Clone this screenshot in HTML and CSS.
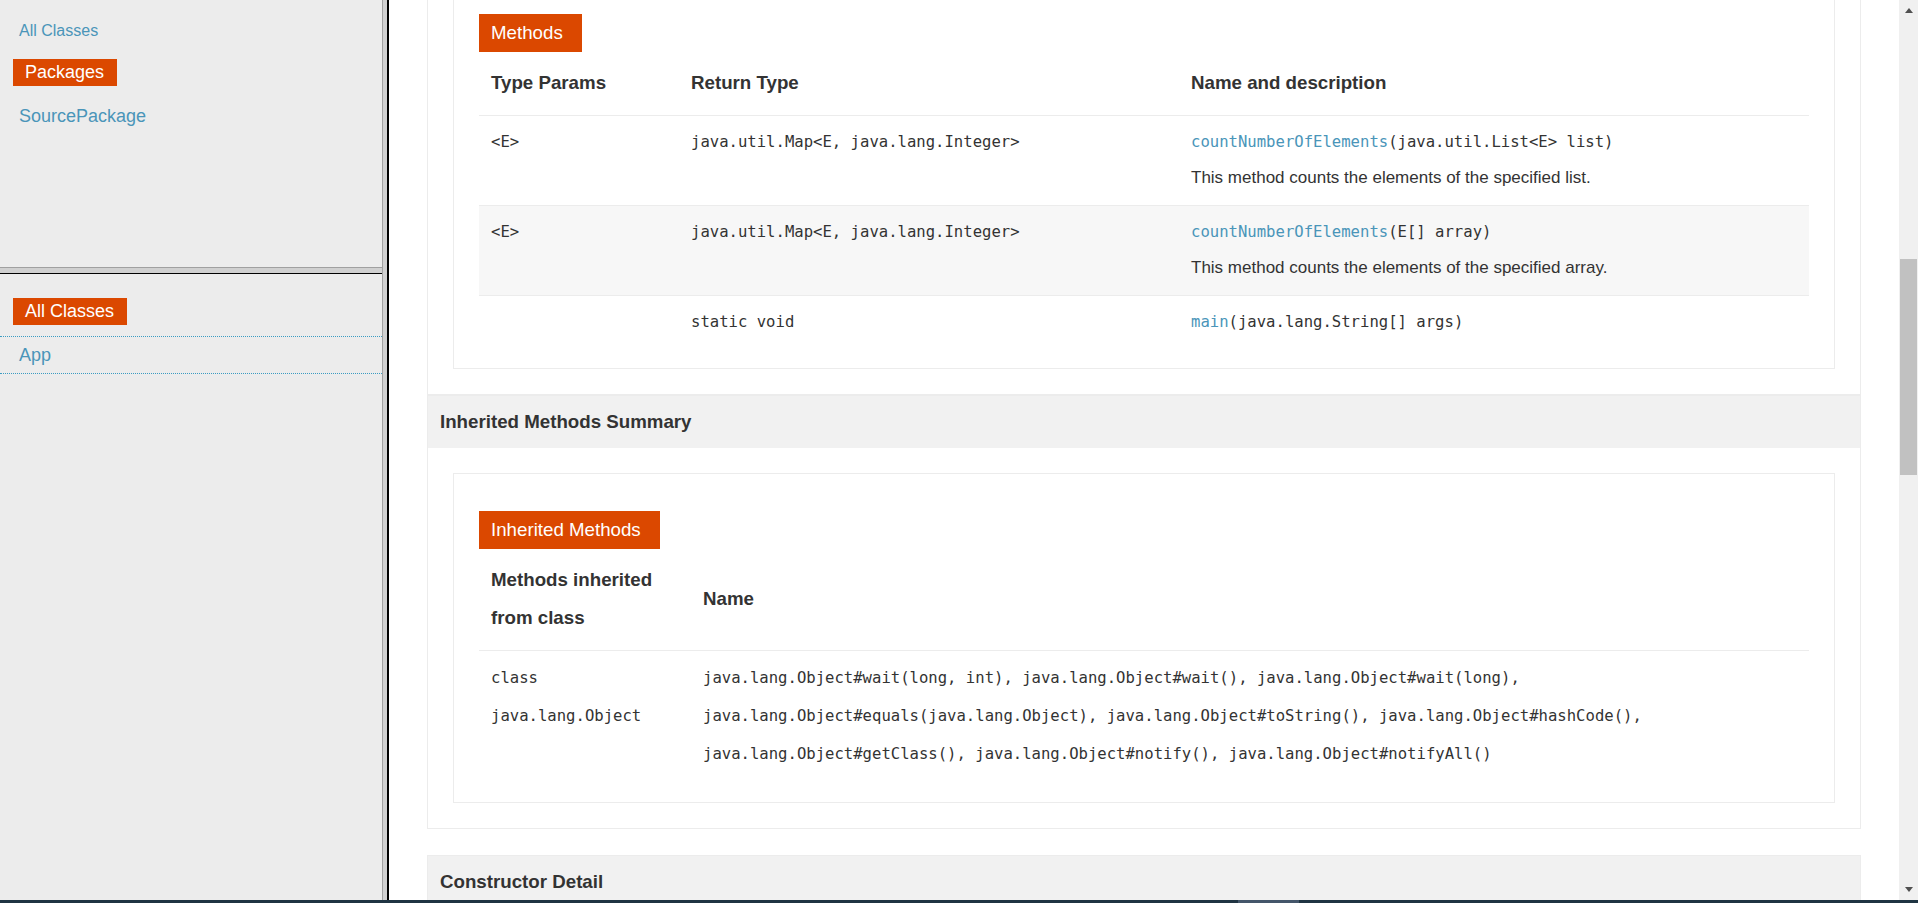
FILE: index.html
```html
<!DOCTYPE html>
<html lang="en">
<head>
<meta charset="utf-8">
<title>App</title>
<link rel="stylesheet" href="styles.css">
</head>
<body>
<div class="frames">
  <div class="left">
    <div class="left-top">
      <a class="nav-link" href="#">All Classes</a>
      <h2 class="tag tag-packages">Packages</h2>
      <a class="pkg-link" href="#">SourcePackage</a>
    </div>
    <div class="hsplit"></div>
    <div class="left-bottom">
      <h2 class="tag tag-classes">All Classes</h2>
      <ul class="class-list">
        <li><a href="#">App</a></li>
      </ul>
    </div>
  </div>
  <div class="vsplit"></div>
  <div class="right">
    <div class="doc">
      <section class="block block-methods">
        <div class="block-body">
          <div class="summary">
            <table class="tbl tbl-methods">
              <caption><span class="caption-tag">Methods</span></caption>
              <colgroup><col class="c-type"><col class="c-ret"><col></colgroup>
              <thead>
                <tr><th>Type Params</th><th>Return Type</th><th>Name and description</th></tr>
              </thead>
              <tbody>
                <tr>
                  <td><code>&lt;E&gt;</code></td>
                  <td><code>java.util.Map&lt;E, java.lang.Integer&gt;</code></td>
                  <td><code><a href="#">countNumberOfElements</a>(java.util.List&lt;E&gt; list)</code>
                    <div class="desc">This method counts the elements of the specified list.</div></td>
                </tr>
                <tr class="alt">
                  <td><code>&lt;E&gt;</code></td>
                  <td><code>java.util.Map&lt;E, java.lang.Integer&gt;</code></td>
                  <td><code><a href="#">countNumberOfElements</a>(E[] array)</code>
                    <div class="desc">This method counts the elements of the specified array.</div></td>
                </tr>
                <tr class="last">
                  <td></td>
                  <td><code>static void</code></td>
                  <td><code><a href="#">main</a>(java.lang.String[] args)</code></td>
                </tr>
              </tbody>
            </table>
          </div>
        </div>
      </section>

      <section class="block block-inherited">
        <h3 class="block-title">Inherited Methods Summary</h3>
        <div class="block-body">
          <div class="summary">
            <table class="tbl tbl-inherited">
              <caption><span class="caption-tag">Inherited Methods</span></caption>
              <colgroup><col class="c-from"><col></colgroup>
              <thead>
                <tr><th>Methods inherited from class</th><th>Name</th></tr>
              </thead>
              <tbody>
                <tr class="last">
                  <td><code>class java.lang.Object</code></td>
                  <td><code>java.lang.Object#wait(long, int), java.lang.Object#wait(), java.lang.Object#wait(long), java.lang.Object#equals(java.lang.Object), java.lang.Object#toString(), java.lang.Object#hashCode(), java.lang.Object#getClass(), java.lang.Object#notify(), java.lang.Object#notifyAll()</code></td>
                </tr>
              </tbody>
            </table>
          </div>
        </div>
      </section>

      <section class="block block-ctor">
        <h3 class="block-title">Constructor Detail</h3>
        <div class="block-body"></div>
      </section>
    </div>
    <div class="scrollbar">
      <div class="sb-btn"><span class="arrow-up"></span></div>
      <div class="sb-track"><div class="sb-thumb"></div></div>
      <div class="sb-btn"><span class="arrow-down"></span></div>
    </div>
  </div>
</div>
<div class="taskbar"><span class="task-item"></span></div>
</body>
</html>
```

FILE: styles.css
```css
* { box-sizing: border-box; }

html, body {
  margin: 0;
  padding: 0;
}

body {
  width: 1918px;
  height: 903px;
  overflow: hidden;
  display: flex;
  flex-direction: column;
  font-family: "Liberation Sans", Arial, sans-serif;
  color: #333;
  background: #fff;
}

a {
  color: #4a95b9;
  text-decoration: none;
}

.frames {
  display: flex;
  height: 900px;
  flex: none;
}

/* ---------- left frames ---------- */
.left {
  width: 382px;
  flex: none;
  display: flex;
  flex-direction: column;
  background: #ececec;
}

.left-top {
  height: 267px;
  flex: none;
  padding-top: 21px;
  display: flex;
  flex-direction: column;
  align-items: flex-start;
}

.nav-link {
  font-size: 16px;
  line-height: 20px;
  margin-left: 19px;
}

.tag {
  display: block;
  width: fit-content;
  background: #db4800;
  color: #fff;
  font-size: 18px;
  font-weight: normal;
  height: 27px;
  line-height: 27px;
  padding: 0 13px 0 12px;
  margin: 0;
}

.tag-packages {
  margin: 18px 0 0 13px;
}

.pkg-link {
  font-size: 18px;
  line-height: 27px;
  margin: 17px 0 0 19px;
}

.hsplit {
  height: 7px;
  flex: none;
  background: #d0d0d0;
  border-top: 1px solid #a0a0a0;
  border-bottom: 1px solid #000;
}

.left-bottom {
  flex: 1;
  padding-top: 24px;
}

.tag-classes {
  margin: 0 0 11px 13px;
}

.class-list {
  list-style: none;
  margin: 0;
  padding: 0;
  border-top: 1px dotted #3c9cc2;
}

.class-list li {
  border-bottom: 1px dotted #3c9cc2;
  font-size: 18px;
  line-height: 36px;
  padding-left: 19px;
}

.vsplit {
  width: 7px;
  flex: none;
  background: #d0d0d0;
  border-left: 1px solid #a0a0a0;
  border-right: 2px solid #000;
}

/* ---------- right frame ---------- */
.right {
  flex: 1;
  min-width: 0;
  display: flex;
  background: #fff;
}

.doc {
  flex: 1;
  min-width: 0;
  overflow: hidden;
  padding: 0 38px;
}

.block {
  border: 1px solid #ececec;
}

.block-methods {
  margin-top: -50px;
}

.block-methods .summary {
  padding-bottom: 19px;
}

.block-inherited {
  margin-bottom: 26px;
}

.block-title {
  margin: 0;
  height: 52px;
  line-height: 52px;
  padding: 0 12px;
  background: #f1f1f1;
  font-size: 18.72px;
  font-weight: bold;
  color: #333;
}

.block-body {
  padding: 25px;
}

.block-ctor .block-body {
  height: 200px;
}

.summary {
  border: 1px solid #ececec;
  padding: 37px 25px 20px;
}

.tbl {
  width: 100%;
  border-collapse: collapse;
  table-layout: fixed;
}

.tbl caption {
  text-align: left;
  caption-side: top;
}

.caption-tag {
  display: block;
  width: fit-content;
  height: 38px;
  line-height: 38px;
  padding: 0 19px 0 12px;
  background: #db4800;
  color: #fff;
  font-size: 18.72px;
}

.c-type { width: 200px; }
.c-ret { width: 500px; }
.c-from { width: 212px; }

.tbl th {
  text-align: left;
  font-size: 18.72px;
  font-weight: bold;
  color: #333;
  line-height: 38px;
  padding: 12px 12px 13px;
  border-bottom: 1px solid #ececec;
  vertical-align: middle;
}

.tbl td {
  vertical-align: top;
  padding: 8px 12px 9px;
  border-bottom: 1px solid #ececec;
  color: #333;
}

.tbl tr.last td {
  border-bottom: none;
}

.tbl tr.alt td {
  background: #f7f7f7;
}

.tbl-methods td {
  line-height: 36px;
}

.tbl-inherited td {
  line-height: 38px;
}

.tbl code {
  font-family: "DejaVu Sans Mono", "Liberation Mono", monospace;
  font-size: 15.6px;
  color: #333;
}

.tbl code a {
  color: #4a95b9;
}

.desc {
  font-size: 17px;
  line-height: 36px;
  color: #333;
}

/* ---------- scrollbar ---------- */
.scrollbar {
  width: 19px;
  flex: none;
  background: #f0f0f0;
  display: flex;
  flex-direction: column;
}

.sb-btn {
  height: 21px;
  flex: none;
  display: flex;
  align-items: center;
  justify-content: center;
}

.arrow-up {
  width: 0;
  height: 0;
  border-left: 4.5px solid transparent;
  border-right: 4.5px solid transparent;
  border-bottom: 5px solid #505050;
}

.arrow-down {
  width: 0;
  height: 0;
  border-left: 4.5px solid transparent;
  border-right: 4.5px solid transparent;
  border-top: 5px solid #505050;
}

.sb-track {
  flex: 1;
  padding: 0 1px 0 1px;
}

.sb-thumb {
  margin-top: 238px;
  height: 216px;
  background: #c1c1c1;
}

/* ---------- bottom edge ---------- */
.taskbar {
  height: 3px;
  flex: none;
  background: #1f3442;
  display: flex;
}

.task-item {
  width: 61px;
  margin-left: 1238px;
  background: #44566a;
}
```
